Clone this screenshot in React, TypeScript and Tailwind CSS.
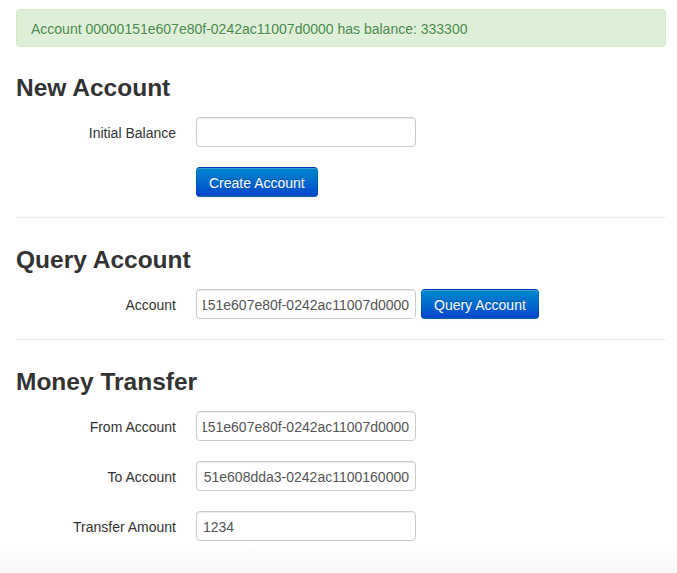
import React, { useEffect, useRef } from "react";

const font = { fontFamily: '"Liberation Sans", Arial, sans-serif' };

function Field({ label, value = "" }: { label: string; value?: string }) {
    const ref = useRef<HTMLInputElement>(null);

    // the original shows the end of long account ids
    useEffect(() => {
        if (ref.current) ref.current.scrollLeft = ref.current.scrollWidth;
    }, []);

    return (
        <div className="flex items-start">
            <label className="w-[160px] pt-[6px] text-right text-[14px] leading-5 text-[#333]">{label}</label>
            <input
                ref={ref}
                defaultValue={value}
                className="ml-5 h-[30px] w-[220px] rounded-[4px] border border-[#ccc] bg-white px-[6px] pt-[5px] pb-[3px] text-[14px] leading-5 text-[#555] shadow-[inset_0_1px_1px_rgba(0,0,0,0.075)] outline-none"
            />
        </div>
    );
}

function PrimaryButton({ children, className = "" }: { children: React.ReactNode; className?: string }) {
    return (
        <button
            className={
                "h-[30px] rounded-[4px] border border-[rgba(0,0,0,0.1)] border-b-[rgba(0,0,0,0.25)] bg-linear-to-b from-[#0088cc] to-[#0044cc] px-3 pt-[2px] text-[14px] leading-5 text-white shadow-[inset_0_1px_0_rgba(255,255,255,0.2),0_1px_2px_rgba(0,0,0,0.05)] [text-shadow:0_-1px_0_rgba(0,0,0,0.25)] " +
                className
            }>
            {children}
        </button>
    );
}

function Heading({ children }: { children: React.ReactNode }) {
    return <h3 className="mt-5 h-10 pt-[2px] text-[24.5px] font-bold leading-[38px] text-[#333]">{children}</h3>;
}

function Divider() {
    return <div className="mt-5 h-[2px] border-t border-b border-t-[#eeeeee] border-b-white" />;
}

export default function App() {
    return (
        <div className="min-h-[573px] bg-white" style={font}>
            <div className="ml-4 flex w-[650px] flex-col pt-[9px]">
                <div className="rounded-[4px] border border-[#d6e9c6] bg-[#dff0d8] pt-[9px] pb-[7px] pl-[14px] pr-[35px] text-[14px] leading-5 text-[#468847] [text-shadow:0_1px_0_rgba(255,255,255,0.5)]">
                    Account 00000151e607e80f-0242ac11007d0000 has balance: 333300
                </div>

                <Heading>New Account</Heading>
                <div className="mt-2.5">
                    <Field label="Initial Balance" />
                </div>
                <div className="mt-5 pl-[180px]">
                    <PrimaryButton>Create Account</PrimaryButton>
                </div>

                <Divider />

                <Heading>Query Account</Heading>
                <div className="mt-2.5 flex items-start">
                    <Field label="Account" value="00000151e607e80f-0242ac11007d0000" />
                    <PrimaryButton className="ml-[5px]">Query Account</PrimaryButton>
                </div>

                <Divider />

                <Heading>Money Transfer</Heading>
                <div className="mt-2.5">
                    <Field label="From Account" value="00000151e607e80f-0242ac11007d0000" />
                </div>
                <div className="mt-5">
                    <Field label="To Account" value="00000151e608dda3-0242ac1100160000" />
                </div>
                <div className="mt-5">
                    <Field label="Transfer Amount" value="1234" />
                </div>
            </div>
            <div className="mt-[7px] h-[25px] bg-linear-to-b from-[#fefefe] to-[#f7f7f7]" />
        </div>
    );
}
